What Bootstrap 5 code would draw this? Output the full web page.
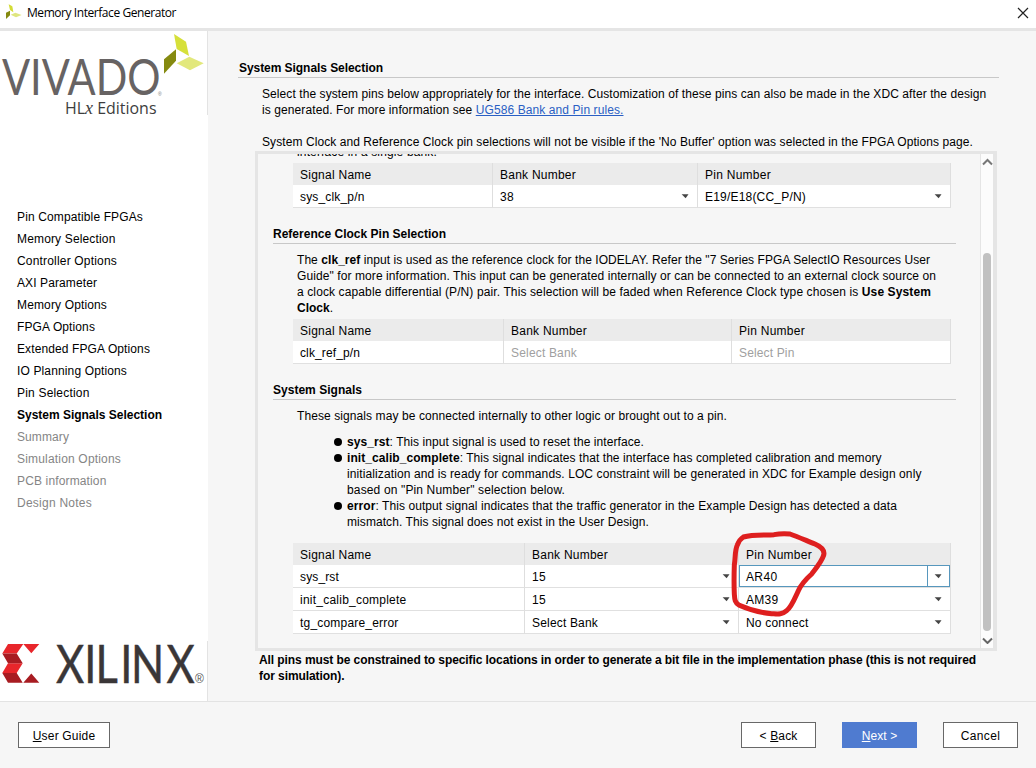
<!DOCTYPE html>
<html lang="en">
<head>
<meta charset="utf-8">
<title>Memory Interface Generator</title>
<link rel="stylesheet" href="https://cdn.jsdelivr.net/npm/bootstrap@5.3.0/dist/css/bootstrap.min.css">
<style>
  body { width: 1036px; height: 768px; overflow: hidden; background: #f6f6f6; color: #000;
         font: 12px/16px "Liberation Sans", Arial, sans-serif; }
  .titlebar { height: 31px; border-bottom: 3px solid #e5e5e5; padding: 0 7px 3px 5px; }
  .titlebar .caption { font-family: "Open Sans", "Noto Sans", sans-serif; margin-left: 5px; }
  .main-area { height: 670px; }
  .sidebar { width: 208px; }
  .sidebar svg { overflow: visible; }
  .logo-box { height: 84px; border-right: 1px solid #e3e3e3; }
  .logo-box.foot { height: 60px; }
  .steps { margin-top: 91px; }
  .steps li { height: 22px; line-height: 22px; padding-left: 17px; }
  .steps .off { color: #858585; }
  .ln { display: block; white-space: nowrap; }
  .fit { display: inline-block; white-space: nowrap; }
  .rule { border-bottom: 1px solid #c8c8c8; padding-bottom: 1px; height: 18px; font-weight: 700; }
  .content-area { padding: 29px 0 0 47px; }
  .top-rule { margin-left: -17px; width: 761px; padding-left: 1px; }
  .intro { padding: 8px 0 0 7px; height: 73px; }
  .intro a { color: #2a5fc4; }
  .panel { width: 742px; height: 500px; border: 3px solid #e5e5e5; border-right-width: 4px; }
  .viewport { height: 494px; width: 722px; overflow: hidden; }
  .scrolled { margin-top: -10px; }
  .para { padding-left: 39px; }
  .clipped { height: 19px; }
  .ref-text { height: 75px; }
  .section-rule { margin: 18px 0 0 15px; width: 683px; }
  .bullets { list-style: none; margin: 10px 0 13px; padding-left: 89px; }
  .bullets li { position: relative; }
  .bullets li::before { content: ""; position: absolute; left: -13px; top: 4px; width: 8px; height: 8px; border-radius: 50%; background: #000; }
  .pins { width: 658px; margin-left: 35px; table-layout: fixed; border-collapse: separate; border-spacing: 0; color: #000; }
  .pins th, .pins td { padding: 0 8px 0 7px; border-right: 1px solid #dedede; font-weight: 400; }
  .pins th { background: #ebebeb; height: 22px; line-height: 24px; }
  .pins th > div { height: 22px; }
  .pins td { background: #fff; height: 23px; border-bottom: 1px solid #e0e0e0; }
  .cell { height: 22px; line-height: 24px; display: flex; justify-content: space-between; }
  .cell svg { margin-top: 9px; }
  .pins .editing { padding: 0; }
  .editing .cell { border: 1px solid #5797bd; padding: 0 7px 0 6px; line-height: 22px; position: relative; }
  .editing .cell svg { margin-top: 8px; }
  .editing .cell::after { content: ""; position: absolute; right: 21px; top: 0; bottom: 0; width: 1px; background: #5797bd; }
  .muted-cell { color: #a0a0a0; }
  .scroller { width: 13px; border-left: 1px solid #e5e5e5; background: #fcfcfc; }
  .thumb { width: 8px; height: 378px; border-radius: 4px; background: #c1c1c1; margin: 87px 0 0 2px; }
  .scroller .up { margin-top: 3px; }
  .notice { padding: 1px 0 0 4px; font-weight: 700; }
  .footer-bar { height: 67px; border-top: 1px solid #e3e3e3; padding: 20px 18px 0; }
  .wbtn { width: 75px; height: 26px; padding: 1px 0 0; border: 1px solid #686868; border-radius: 0; background: #fff; color: #000; font-size: 12px; line-height: 24px; }
  .wbtn.primary { background: #4f7bd0; border-color: #4f7bd0; color: #fff; margin: 0 26px; }
  .guide { width: 92px; }
  .marker { position: absolute; left: 690px; top: 520px; pointer-events: none; }
</style>
</head>
<body class="d-flex flex-column position-relative">
<svg width="0" height="0" class="position-absolute"><defs>
  <symbol id="caret" viewBox="0 0 8 5"><path d="M.6.3h6.900L4.600 4.300z" fill="#444"/></symbol>
</defs></svg>

<header class="titlebar bg-white d-flex align-items-center flex-shrink-0">
  <svg width="17" height="17" viewBox="0 0 51 51">
    <path d="M11 1l11 6 3 18-10-7z" fill="#d3dc36"/><path d="M3 26l12-6v14L3 45z" fill="#858a10"/><path d="M17 32l14-6 19 7-17 7z" fill="#dfe680"/>
  </svg>
  <span class="caption fit" data-w="149">Memory Interface Generator</span>
  <svg class="ms-auto" width="12" height="12" viewBox="0 0 12 12"><path d="M1 1l10 10M11 1L1 11" stroke="#222" stroke-width="1.2"/></svg>
</header>

<main class="main-area d-flex flex-shrink-0">
  <aside class="sidebar bg-white d-flex flex-column flex-shrink-0">
    <div class="logo-box">
      <svg class="d-block" width="207" height="88" viewBox="0 31 207 88">
        <text x="2" y="95" font-family="Lato" font-size="50.500" fill="#676363" textLength="158.500" lengthAdjust="spacingAndGlyphs">VIVADO</text>
        <text x="158" y="95.500" font-size="5" fill="#777">®</text>
        <path d="M174 34l12 7.700 3 14.300-12.300-7z" fill="#d6e03a"/><path d="M164 59.300l12-10v11.400l-12 13z" fill="#858a10"/><path d="M176.700 63.300l12.600-6.600 14.400 6.600-13.700 7z" fill="#e2e87c"/>
        <text x="65" y="114" font-family="Open Sans" font-size="16" fill="#3d3d3d" textLength="91.500" lengthAdjust="spacingAndGlyphs">HL<tspan font-family="Liberation Serif" font-style="italic" font-size="18">x</tspan> Editions</text>
      </svg>
    </div>
    <ul class="steps list-unstyled mb-0">
      <li><span class="fit" data-w="126">Pin Compatible FPGAs</span></li>
      <li><span class="fit" data-w="98.500">Memory Selection</span></li>
      <li><span class="fit" data-w="100">Controller Options</span></li>
      <li><span class="fit" data-w="80">AXI Parameter</span></li>
      <li><span class="fit" data-w="90">Memory Options</span></li>
      <li><span class="fit" data-w="78">FPGA Options</span></li>
      <li><span class="fit" data-w="133">Extended FPGA Options</span></li>
      <li><span class="fit" data-w="110">IO Planning Options</span></li>
      <li><span class="fit" data-w="72.500">Pin Selection</span></li>
      <li class="fw-bold"><span class="fit" data-w="145">System Signals Selection</span></li>
      <li class="off"><span class="fit" data-w="52">Summary</span></li>
      <li class="off"><span class="fit" data-w="104">Simulation Options</span></li>
      <li class="off"><span class="fit" data-w="89.500">PCB information</span></li>
      <li class="off"><span class="fit" data-w="75">Design Notes</span></li>
    </ul>
    <div class="logo-box foot mt-auto">
      <svg class="d-block" width="207" height="59" viewBox="0 641 207 59">
        <g fill="#e8262b"><path d="M8 644h15.300l-6.600 9.500H2.300zM8 663.300h14.700l-6 9.700H2.300zM23.300 644h16l-8 9.300z"/></g>
        <g fill="#a81c22"><path d="M2.300 653.500h14.400l6 9.800H8zM2.300 673h14.400l6 9.700H8zM23.300 682.700h16l-8-9.200z"/></g>
        <text transform="translate(56 682.500) scale(.82 1)" x="0 34.500 48.300 78.500 91.500 134.800" y="0" font-family="Lato" font-size="53" fill="#3a3637" stroke="#3a3637" stroke-width=".5">XILINX</text>
        <text x="195" y="682.500" font-size="12" fill="#555">®</text>
      </svg>
    </div>
  </aside>

  <section class="content-area flex-grow-1">
    <div class="rule top-rule"><span class="fit" data-w="144">System Signals Selection</span></div>
    <div class="intro">
      <div class="ln"><span class="fit" data-w="724.300">Select the system pins below appropriately for the interface. Customization of these pins can also be made in the XDC after the design</span></div>
      <div class="ln mb-3"><span class="fit" data-w="361.500">is generated. For more information see <a href="#">UG586 Bank and Pin rules.</a></span></div>
      <div class="ln"><span class="fit" data-w="711">System Clock and Reference Clock pin selections will not be visible if the 'No Buffer' option was selected in the FPGA Options page.</span></div>
    </div>

    <div class="panel d-flex">
      <div class="viewport">
        <div class="scrolled">
          <div class="para clipped"><span class="fit" data-w="140">interface in a single bank.</span></div>
          <table class="pins">
            <colgroup><col style="width:200px"><col style="width:205px"><col></colgroup>
            <tr><th><div><span class="fit" data-w="71.500">Signal Name</span></div></th><th><div><span class="fit" data-w="76">Bank Number</span></div></th><th><div><span class="fit" data-w="66">Pin Number</span></div></th></tr>
            <tr><td><div class="cell"><span class="fit" data-w="64.500">sys_clk_p/n</span></div></td>
                <td><div class="cell"><span class="fit" data-w="14">38</span><svg width="8" height="5"><use href="#caret"/></svg></div></td>
                <td><div class="cell"><span class="fit" data-w="101">E19/E18(CC_P/N)</span><svg width="8" height="5"><use href="#caret"/></svg></div></td></tr>
          </table>

          <div class="rule section-rule"><span class="fit" data-w="173">Reference Clock Pin Selection</span></div>
          <div class="para ref-text pt-2">
            <div class="ln"><span class="fit" data-w="633">The <b>clk_ref</b> input is used as the reference clock for the IODELAY. Refer the "7 Series FPGA SelectIO Resources User</span></div>
            <div class="ln"><span class="fit" data-w="639">Guide" for more information. This input can be generated internally or can be connected to an external clock source on</span></div>
            <div class="ln"><span class="fit" data-w="634">a clock capable differential (P/N) pair. This selection will be faded when Reference Clock type chosen is <b>Use System</b></span></div>
            <div class="ln"><span class="fit" data-w="36"><b>Clock</b>.</span></div>
          </div>
          <table class="pins">
            <colgroup><col style="width:211px"><col style="width:228px"><col></colgroup>
            <tr><th><div><span class="fit" data-w="71.500">Signal Name</span></div></th><th><div><span class="fit" data-w="76">Bank Number</span></div></th><th><div><span class="fit" data-w="66">Pin Number</span></div></th></tr>
            <tr><td><div class="cell"><span class="fit" data-w="60">clk_ref_p/n</span></div></td>
                <td><div class="cell muted-cell"><span class="fit" data-w="66">Select Bank</span></div></td>
                <td><div class="cell muted-cell"><span class="fit" data-w="55.500">Select Pin</span></div></td></tr>
          </table>

          <div class="rule section-rule"><span class="fit" data-w="89">System Signals</span></div>
          <div class="para pt-2"><div class="ln"><span class="fit" data-w="430">These signals may be connected internally to other logic or brought out to a pin.</span></div></div>
          <ul class="bullets">
            <li><div class="ln"><span class="fit" data-w="297"><b>sys_rst</b>: This input signal is used to reset the interface.</span></div></li>
            <li><div class="ln"><span class="fit" data-w="534.500"><b>init_calib_complete</b>: This signal indicates that the interface has completed calibration and memory</span></div>
                <div class="ln"><span class="fit" data-w="574.500">initialization and is ready for commands. LOC constraint will be generated in XDC for Example design only</span></div>
                <div class="ln"><span class="fit" data-w="218">based on "Pin Number" selection below.</span></div></li>
            <li><div class="ln"><span class="fit" data-w="550"><b>error</b>: This output signal indicates that the traffic generator in the Example Design has detected a data</span></div>
                <div class="ln"><span class="fit" data-w="302">mismatch. This signal does not exist in the User Design.</span></div></li>
          </ul>
          <table class="pins">
            <colgroup><col style="width:232px"><col style="width:214px"><col></colgroup>
            <tr><th><div><span class="fit" data-w="71.500">Signal Name</span></div></th><th><div><span class="fit" data-w="76">Bank Number</span></div></th><th><div><span class="fit" data-w="66">Pin Number</span></div></th></tr>
            <tr><td><div class="cell"><span class="fit" data-w="39">sys_rst</span></div></td>
                <td><div class="cell"><span class="fit" data-w="14">15</span><svg width="8" height="5"><use href="#caret"/></svg></div></td>
                <td class="editing"><div class="cell"><span class="fit" data-w="31.500">AR40</span><svg width="8" height="5"><use href="#caret"/></svg></div></td></tr>
            <tr><td><div class="cell"><span class="fit" data-w="106.500">init_calib_complete</span></div></td>
                <td><div class="cell"><span class="fit" data-w="14">15</span><svg width="8" height="5"><use href="#caret"/></svg></div></td>
                <td><div class="cell"><span class="fit" data-w="32.500">AM39</span><svg width="8" height="5"><use href="#caret"/></svg></div></td></tr>
            <tr><td><div class="cell"><span class="fit" data-w="98.500">tg_compare_error</span></div></td>
                <td><div class="cell"><span class="fit" data-w="66">Select Bank</span><svg width="8" height="5"><use href="#caret"/></svg></div></td>
                <td><div class="cell"><span class="fit" data-w="62.500">No connect</span><svg width="8" height="5"><use href="#caret"/></svg></div></td></tr>
          </table>
        </div>
      </div>
      <div class="scroller d-flex flex-column">
        <svg width="12" height="9" class="up flex-shrink-0" viewBox="0 0 12 9"><path d="M2 7.500l4.500-4.500L11 7.500" fill="none" stroke="#777" stroke-width="2"/></svg>
        <div class="thumb flex-shrink-0"></div>
        <svg width="12" height="10" class="mt-auto flex-shrink-0 mb-1" viewBox="0 0 12 10"><path d="M2 4.500l4.500 4.500L11 4.500" fill="none" stroke="#666" stroke-width="2"/></svg>
      </div>
    </div>

    <div class="notice">
      <div class="ln"><span class="fit" data-w="717">All pins must be constrained to specific locations in order to generate a bit file in the implementation phase (this is not required</span></div>
      <div class="ln"><span class="fit" data-w="85.500">for simulation).</span></div>
    </div>
  </section>
</main>

<footer class="footer-bar d-flex align-items-start flex-shrink-0">
  <button class="btn wbtn guide"><span class="fit" data-w="62.500"><u>U</u>ser Guide</span></button>
  <button class="btn wbtn ms-auto"><span class="fit" data-w="38">&lt; <u>B</u>ack</span></button>
  <button class="btn wbtn primary"><span class="fit" data-w="35.500"><u>N</u>ext &gt;</span></button>
  <button class="btn wbtn"><span class="fit" data-w="39.500">Cancel</span></button>
</footer>

<svg class="marker" width="150" height="110" viewBox="0 0 450 330" fill="none" stroke="#de1f1f" stroke-width="15" stroke-linejoin="round">
  <path d="M160 51C190 42 225 46 252 44C272 40 290 41 300 42C318 48 350 62 375 72C398 82 404 95 401 106C395 125 382 140 365 162C345 180 335 190 325 212C312 240 305 260 290 272C275 285 262 282 245 281C210 278 170 266 148 256C134 248 134 238 133 222C132 200 132 165 133 135C137 110 134 92 142 75C147 62 152 56 160 51Z"/>
</svg>

<script src="https://cdn.jsdelivr.net/npm/bootstrap@5.3.0/dist/js/bootstrap.bundle.min.js"></script>
<script>
  document.querySelectorAll('.fit').forEach(function (el) {
    var gap = (parseFloat(el.dataset.w) - el.getBoundingClientRect().width) / el.textContent.length;
    el.style.letterSpacing = gap.toFixed(3) + 'px';
  });
</script>
</body>
</html>
